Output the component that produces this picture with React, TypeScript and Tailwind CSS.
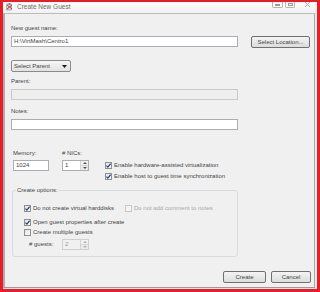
import React from 'react';

type CheckProps = { checked?: boolean; disabled?: boolean; label: string; className?: string };

const Check: React.FC<CheckProps> = ({ checked, disabled, label, className = '' }) => (
  <div className={`flex items-center h-[7px] ${className}`}>
    <span
      className={`w-[7px] h-[7px] shrink-0 border flex items-center justify-center ${
        disabled ? 'border-[#c8c8c8] bg-[#f4f4f4]' : 'border-[#8e8f8f] bg-linear-to-br from-[#e4e4e4] to-[#fbfbfb]'
      }`}
    >
      {checked && (
        <svg width="5" height="5" viewBox="0 0 5 5">
          <path d="M0.4 2.6 L1.9 4.1 L4.6 0.7" stroke="#2a3f78" strokeWidth="1.2" fill="none" />
        </svg>
      )}
    </span>
    <span className={`ml-[2px] leading-[7px] whitespace-nowrap ${disabled ? 'text-[#a8a8a8]' : ''}`}>{label}</span>
  </div>
);

const TextBox: React.FC<{ value?: string; w: string; disabled?: boolean }> = ({ value, w, disabled }) => (
  <div
    className={`${w} h-[11px] border flex items-center px-[2px] leading-[9px] ${
      disabled ? 'border-[#c9c9c9] bg-[#eeeeee]' : 'border-[#abadb3] bg-white'
    }`}
  >
    {value}
  </div>
);

const Spinner: React.FC<{ value: string; disabled?: boolean }> = ({ value, disabled }) => (
  <div className={`w-[27px] h-[11px] border flex ${disabled ? 'border-[#cfcfcf] bg-[#f0f0f0] text-[#9a9a9a]' : 'border-[#abadb3] bg-white'}`}>
    <span className="flex-1 px-[2px] leading-[9px]">{value}</span>
    <span className="w-[8px] flex flex-col border-l border-[#d4d4d4]">
      <span className="flex-1 flex items-center justify-center border-b border-[#d4d4d4] bg-[#f2f2f2]">
        <svg width="4" height="2" viewBox="0 0 4 2"><path d="M0 2 L2 0 L4 2Z" fill={disabled ? '#b0b0b0' : '#505050'} /></svg>
      </span>
      <span className="flex-1 flex items-center justify-center bg-[#eaeaea]">
        <svg width="4" height="2" viewBox="0 0 4 2"><path d="M0 0 L4 0 L2 2Z" fill={disabled ? '#b0b0b0' : '#505050'} /></svg>
      </span>
    </span>
  </div>
);

const Button: React.FC<{ label: string; w: string }> = ({ label, w }) => (
  <div className={`${w} h-[12px] rounded-[2px] border border-[#707070] bg-linear-to-b from-[#f4f4f4] to-[#dcdcdc] flex items-center justify-center leading-[10px]`}>
    {label}
  </div>
);

export default function App() {
  return (
    <div className="w-[320px] h-[292px] bg-[#ea1c24] pt-[2px] pl-[3px] pr-[3px] pb-[3px] font-['Liberation_Sans',Arial,sans-serif] text-[6px] text-[#444444]">
      <div className="h-full flex flex-col bg-[#e6e9ed]">
        {/* title bar */}
        <div className="h-[11px] flex items-start bg-linear-to-b from-[#ffffff] to-[#f1f1f1]">
          <svg className="ml-[3px] mt-[1px]" width="7" height="8" viewBox="0 0 7 8">
            <rect x="0.5" y="1" width="5" height="6" fill="#d9d9d9" stroke="#8a8a8a" strokeWidth="0.6" />
            <path d="M1 2 L6 6 M6 2 L1 6" stroke="#c0392b" strokeWidth="1" />
            <rect x="2.5" y="0" width="2" height="2" fill="#7d8aa0" />
          </svg>
          <span className="ml-[4px] mt-[1px] text-[6.5px] leading-[8px] text-[#6a6a6a]">Create New Guest</span>
          <div className="ml-auto flex items-start mr-[6px]">
            <span className="w-[11px] h-[6px] border border-t-0 border-[#b4b4b4] rounded-b-[2px] bg-[#fafafa] flex items-end justify-center pb-[1px]">
              <span className="w-[5px] h-[2px] border border-[#9a9a9a]" />
            </span>
            <span className="ml-[2px] w-[10px] h-[6px] border border-t-0 border-[#b4b4b4] rounded-b-[2px] bg-[#fafafa] flex items-end justify-center pb-[1px]">
              <span className="w-[5px] h-[3px] border border-[#9a9a9a]" />
            </span>
            <svg className="ml-[9px]" width="7" height="5" viewBox="0 0 7 5">
              <path d="M1 0 L6 5 M6 0 L1 5" stroke="#a0a0a0" strokeWidth="0.9" />
            </svg>
          </div>
        </div>

        {/* body */}
        <div className="flex-1 mr-[2px] mb-[1px] border-t border-l-[2px] border-r border-b border-t-[#bdbdbd] border-l-[#a6b0bb] border-r-[#a9a9a9] border-b-[#9a9a9a] bg-[#f0f0f0] pl-[6px] pt-[11px] flex flex-col">
          <div className="h-[7px] leading-[7px]">New guest name:</div>
          <div className="mt-[4px] flex items-start">
            <TextBox w="w-[227px]" value="H:\VirtMash\Centro1" />
            <div className="ml-[13px]">
              <Button w="w-[59px]" label="Select Location..." />
            </div>
          </div>

          <div className="mt-[12px] w-[60px] h-[12px] rounded-[2px] border border-[#8a8a8a] bg-linear-to-b from-[#f6f6f6] to-[#e2e2e2] flex items-center pl-[2px] pr-[3px] leading-[10px]">
            <span>Select Parent</span>
            <svg className="ml-auto" width="5" height="3" viewBox="0 0 5 3"><path d="M0 0 L5 0 L2.5 3Z" fill="#1a1a1a" /></svg>
          </div>

          <div className="mt-[6px] h-[7px] leading-[7px]">Parent:</div>
          <div className="mt-[4px]">
            <TextBox w="w-[227px]" disabled />
          </div>

          <div className="mt-[8px] h-[7px] leading-[7px]">Notes:</div>
          <div className="mt-[4px]">
            <TextBox w="w-[227px]" />
          </div>

          <div className="mt-[20px] ml-[2px] flex h-[7px] leading-[7px]">
            <span className="w-[49px]">Memory:</span>
            <span># NICs:</span>
          </div>
          <div className="mt-[3px] ml-[2px] flex items-start">
            <TextBox w="w-[36px]" value="1024" />
            <div className="ml-[13px]">
              <Spinner value="1" />
            </div>
            <div className="ml-[16px] mt-[2px] flex flex-col gap-[4px]">
              <Check checked label="Enable hardware-assisted virtualization" />
              <Check checked label="Enable host to guest time synchronization" />
            </div>
          </div>

          <fieldset className="mt-[6px] ml-[1px] w-[226px] border border-[#d5dbe0] rounded-[3px] pl-[11px] pb-[6px]">
            <legend className="ml-[-8px] px-[1px] h-[8px] leading-[8px]">Create options:</legend>
            <div className="mt-[11px] flex">
              <div className="w-[101px]">
                <Check checked label="Do not create virtual harddisks" />
              </div>
              <Check disabled label="Do not add comment to notes" />
            </div>
            <Check className="mt-[7px]" checked label="Open guest properties after create" />
            <Check className="mt-[3px]" label="Create multiple guests" />
            <div className="mt-[3px] flex items-center">
              <span className="ml-[5px] w-[33px] leading-[7px]"># guests:</span>
              <Spinner value="2" disabled />
            </div>
          </fieldset>

          <div className="mt-[14px] flex justify-end pr-[3px] gap-[5px]">
            <Button w="w-[43px]" label="Create" />
            <Button w="w-[40px]" label="Cancel" />
          </div>
        </div>
      </div>
    </div>
  );
}
